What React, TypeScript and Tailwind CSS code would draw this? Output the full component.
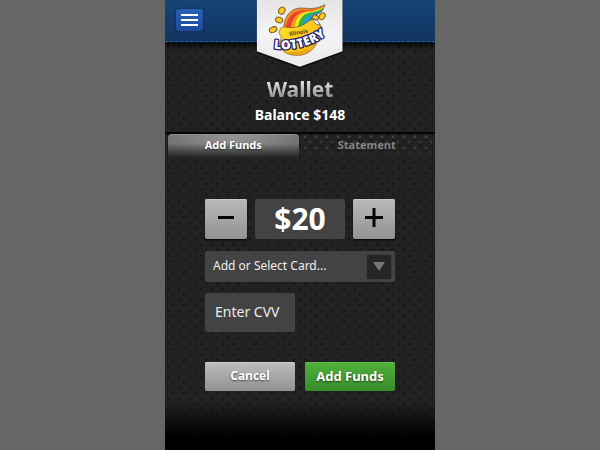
import { useState } from "react";

function LotteryBadge() {
  return (
    <svg viewBox="21 0 261 210" width="87" height="70" role="img" aria-label="Illinois Lottery">
      <defs>
        <linearGradient id="paper" x1="0" y1="0" x2="0" y2="1">
          <stop offset="0" stopColor="#e4e4e4" />
          <stop offset="0.5" stopColor="#f4f4f4" />
          <stop offset="1" stopColor="#ececec" />
        </linearGradient>
        <linearGradient id="pot" x1="0" y1="0" x2="1" y2="1">
          <stop offset="0" stopColor="#ffe63a" />
          <stop offset="0.6" stopColor="#fcc415" />
          <stop offset="1" stopColor="#e99a12" />
        </linearGradient>
        <path id="wordmark" d="M73 145 Q165 158 240 98" />
        <clipPath id="bow">
          <path d="M103 90 C101 48 126 22 160 24 C185 27 203 26 226 14 C222 31 214 39 199 44 C185 49 183 55 187 66 L190 92 Q145 104 103 90 Z" />
        </clipPath>
      </defs>
      <path d="M22 0 H281 V158 L151 206 L22 158 Z" fill="#000" opacity="0.55" />
      <path d="M22 0 H279 V154 L151 200 L22 154 Z" fill="url(#paper)" />
      <path d="M30 0 V149 L151 191 L271 149 V0" fill="none" stroke="#dedede" strokeWidth="1.5" strokeDasharray="5 3" />
      <g clipPath="url(#bow)">
        <rect x="90" y="0" width="150" height="110" fill="#f58a25" />
        <path d="M108 105 C106 50 135 31 164 31 C188 33 210 29 235 8 V110 Z" fill="#e5432b" />
        <path d="M122 105 C122 55 144 36 170 34 C190 34 215 25 237 6 V110 Z" fill="#f7941e" />
        <path d="M132 105 C134 57 150 38 174 35 C194 35 218 27 238 9 V110 Z" fill="#fbe51c" />
        <path d="M142 105 C145 60 158 42 180 38 C198 36 220 29 238 12 V110 Z" fill="#34b44a" />
        <path d="M155 105 C158 66 167 49 187 43 C202 40 221 32 238 16 V110 Z" fill="#1ba3dd" />
        <path d="M170 105 C172 69 178 56 191 50 C207 44 220 38 238 22 V110 Z" fill="#2560b8" />
      </g>
      <path d="M103 90 C101 48 126 22 160 24 C185 27 203 26 226 14 C222 31 214 39 199 44 C185 49 183 55 187 66 L190 92" fill="none" stroke="#5a4a50" strokeWidth="2" />
      <path d="M91 91 C94 76 108 82 123 83 C148 83 163 75 180 62 C194 52 207 65 215 78 C219 87 209 92 207 101 C209 133 184 164 148 166 C120 167 94 158 90 132 C92 120 101 111 90 103 Q85 97 91 91 Z" fill="url(#pot)" stroke="#795015" strokeWidth="2" />
      <path d="M120 158 Q148 164 175 150" fill="none" stroke="#e09916" strokeWidth="4" strokeLinecap="round" />
      <path d="M187 57 L199 72 L212 76 L204 61 Z" fill="#fff" stroke="#40415a" strokeWidth="2" />
      <g fill="#f8ca23" stroke="#805616" strokeWidth="3">
        <ellipse cx="97" cy="32" rx="9" ry="11" transform="rotate(28 97 32)" />
        <ellipse cx="89" cy="60" rx="11" ry="8" transform="rotate(18 89 60)" />
        <ellipse cx="71" cy="89" rx="12" ry="8" transform="rotate(-22 71 89)" />
        <ellipse cx="198" cy="52" rx="9" ry="7" transform="rotate(25 198 52)" />
        <ellipse cx="218" cy="49" rx="8" ry="11" transform="rotate(38 218 49)" />
      </g>
      <g className="font-['Open_Sans',sans-serif]">
        <text x="120" y="108" fontSize="17" fontWeight="700" fill="#5c3d08" transform="rotate(-10 120 108)">Illinois</text>
        <text fontSize="37" fontWeight="800" fill="#fff" stroke="#24246e" strokeWidth="8" strokeLinejoin="round" paintOrder="stroke">
          <textPath href="#wordmark">LOTTERY</textPath>
        </text>
      </g>
    </svg>
  );
}

function Header() {
  return (
    <header className="relative z-10 h-[43px] border-b border-[#07182e] bg-[linear-gradient(#164477,#12345f)] px-[11px] pt-[9px] shadow-[0_2px_5px_#000]">
      <button type="button" aria-label="Menu" className="flex h-[22px] w-[27px] flex-col items-center justify-center gap-[3px] rounded-[3px] bg-[linear-gradient(#2861b8,#1c4b9c)] shadow-[0_0_2px_#08224a]">
        <span className="h-[2px] w-[17px] bg-white" />
        <span className="h-[2px] w-[17px] bg-white" />
        <span className="h-[2px] w-[17px] bg-white" />
      </button>
      <div className="absolute inset-x-0 bottom-0 border-t border-dashed border-[#2d5788]" />
      <div className="absolute top-0 left-1/2 -translate-x-1/2">
        <LotteryBadge />
      </div>
    </header>
  );
}

const tabs = ["Add Funds", "Statement"];

export default function App() {
  const [tab, setTab] = useState("Add Funds");
  const [amount, setAmount] = useState(20);
  const stepButton =
    "flex h-10 items-center justify-center rounded-[2px] bg-[linear-gradient(#b9b9b9,#929292)] pb-1 text-black shadow-[inset_0_1px_#c8c8c8,0_1px_2px_#000]";
  const actionButton =
    "h-[29px] flex-1 rounded-[2px] pb-[2px] leading-5 font-bold text-white [text-shadow:0_1px_2px_#0009]";

  return (
    <div className="min-h-screen bg-[#666] font-['Noto_Sans','Open_Sans',sans-serif]">
      <div className="mx-auto flex min-h-screen w-full max-w-[270px] flex-col overflow-x-clip bg-[#222] bg-[radial-gradient(circle_at_3px_3px,#121212,transparent_2px),radial-gradient(circle_at_8px_8px,#121212,transparent_2px)] bg-size-[11px_11px]">
        <Header />
        <section className="flex h-[91px] flex-col items-center border-b-2 border-[#050505] pt-8 text-center">
          <h1 className="bg-[linear-gradient(#e0e0e0_25%,#8c8c8c_85%)] bg-clip-text text-[21px] leading-7 font-bold text-transparent">Wallet</h1>
          <p className="text-[14px] leading-6 font-bold text-white">Balance $148</p>
        </section>
        <div role="tablist" aria-label="Wallet sections" className="flex h-6 gap-[3px] px-[3px]">
          {tabs.map((name) => (
            <button
              key={name}
              type="button"
              role="tab"
              aria-selected={tab === name}
              onClick={() => setTab(name)}
              className={
                tab === name
                  ? "flex-1 rounded-t-[4px] bg-[linear-gradient(transparent_40%,#222),radial-gradient(ellipse_at_top,#989898,#666)] pb-[2px] text-[11px] leading-5 font-bold text-white shadow-[inset_0_1px_#909090] [text-shadow:0_1px_2px_#0009]"
                  : "flex-1 bg-[linear-gradient(transparent_50%,#222),radial-gradient(circle_at_3px_3px,#505050,transparent_2px),radial-gradient(circle_at_8px_8px,#444,transparent_2px)] bg-size-[100%_100%,11px_11px,11px_11px] pb-[2px] text-[11px] leading-5 font-bold text-[#858585]"
              }
            >
              {name}
            </button>
          ))}
        </div>
        <form className="px-10 pt-[41px]" onSubmit={(e) => e.preventDefault()}>
          <div className="flex gap-2">
            <button type="button" aria-label="Decrease amount" className={`${stepButton} w-[42px]`} onClick={() => setAmount(Math.max(5, amount - 5))}>
              <svg width="20" height="20" viewBox="0 0 20 20" aria-hidden="true"><path d="M2 10.5H18" stroke="#050505" strokeWidth="3" /></svg>
            </button>
            <output aria-label="Amount" className="h-10 flex-1 rounded-[2px] bg-[#434343] text-center text-[30px] leading-10 font-bold text-white">${amount}</output>
            <button type="button" aria-label="Increase amount" className={`${stepButton} w-[42px]`} onClick={() => setAmount(amount + 5)}>
              <svg width="20" height="20" viewBox="0 0 20 20" aria-hidden="true"><path d="M1 10.5H19M10 1V20" stroke="#050505" strokeWidth="3" /></svg>
            </button>
          </div>
          <div className="relative mt-3">
            <select aria-label="Card" className="block h-[31px] w-full appearance-none rounded-[2px] bg-[#434343] px-2 pb-[2px] text-[12px] leading-5 text-[#eee]">
              <option>Add or Select Card...</option>
            </select>
            <span className="pointer-events-none absolute inset-y-0 right-1 my-auto flex h-6 w-6 items-center justify-center rounded-[2px] bg-[#262626] shadow-[0_0_1px_#111]">
              <svg width="12" height="9" viewBox="0 0 12 9" aria-hidden="true"><path d="M0 0H12L6 9Z" fill="#777" /></svg>
            </span>
          </div>
          <input aria-label="Enter CVV" placeholder="Enter CVV" inputMode="numeric" className="mt-[11px] block h-[39px] w-[90px] rounded-[2px] bg-[#434343] px-[10px] pb-[2px] text-[14px] leading-5 text-white placeholder:text-[#eee]" />
          <div className="mt-[30px] flex gap-[10px]">
            <button type="button" className={`${actionButton} bg-[linear-gradient(#bdbdbd,#929292)] text-[12px] shadow-[inset_0_1px_#cecece]`}>Cancel</button>
            <button type="submit" className={`${actionButton} bg-[linear-gradient(#51b13d,#388c2a)] text-[13px] shadow-[inset_0_1px_#62bf50]`}>Add Funds</button>
          </div>
        </form>
        <div className="mt-auto h-[50px] bg-[linear-gradient(transparent,#000_75%)]" />
      </div>
    </div>
  );
}
